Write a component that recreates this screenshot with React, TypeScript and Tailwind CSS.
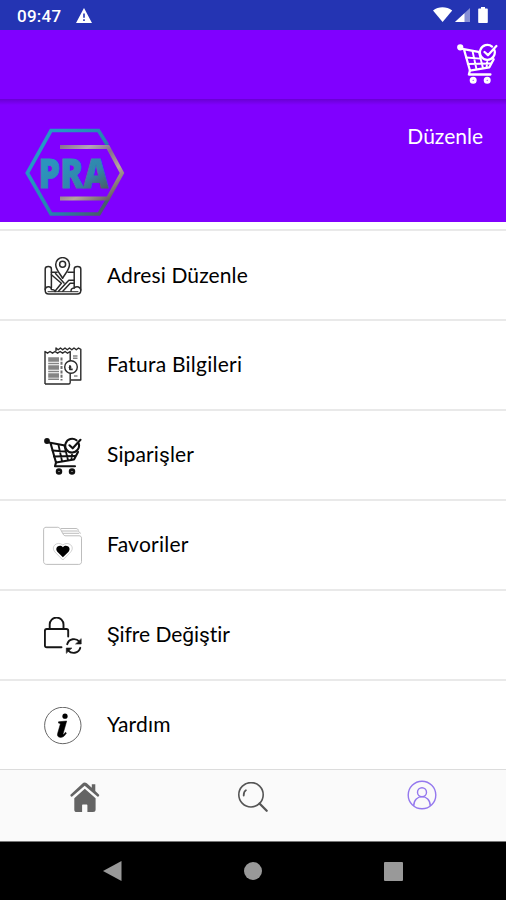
import type { ReactNode } from "react";

function CartIcon({ className }: { className: string }) {
  return (
    <svg viewBox="0 0 38 38" className={className} fill="none" stroke="currentColor" strokeWidth="2.1" strokeLinecap="round" strokeLinejoin="round">
      <circle cx="3" cy="4" r="1.5" strokeWidth="2.8" />
      <path d="M5 5.5 21 8.5M6.5 6 12 25.5 30 22.5 34 15" />
      <path d="M8.5 13.5 21.5 14.5M10 19.5 31 19M14.5 8 18 24M20.5 9 24 23M28 17.5 27.5 22" strokeWidth="1.8" />
      <path d="M12 25.5 11 29.2H31" />
      <path d="M34.7 6.5A6.9 6.9 0 1 1 32.5 3.3M25.5 8.3 28.7 11.3 36.5 2.8" />
      <circle cx="15" cy="34.5" r="1.9" strokeWidth="2.7" />
      <circle cx="28" cy="34.5" r="1.9" strokeWidth="2.7" />
    </svg>
  );
}

function MapIcon() {
  return (
    <svg viewBox="0 0 38 38" className="size-[38px]" fill="none" stroke="#2a2a2a" strokeWidth="1.5" strokeLinejoin="round" strokeLinecap="round">
      <path d="M18.6 21.3C16 16.5 11.7 12.6 11.7 7.5a6.9 6.9 0 0 1 13.8 0c0 5.1-4.3 9-6.9 13.8Z" />
      <circle cx="18.6" cy="7.3" r="3" />
      <path d="M7.4 31V12c0-3.2-6.2-3.2-6.2 0v21.5c0 2 1.4 3.5 3.5 3.5h28.4c2.1 0 3.7-1.5 3.7-3.5V12c0-3.2-6.6-3.2-6.6 0v19" />
      <path d="M1.2 32.3c.6-3.3 6.2-3.3 6.2.2 2.4 0 3.5 1 3.8 2M30.2 31c-3 0-3.3 2-3.1 3.3M30.2 31c2.8-2.4 6.4-.8 6.6 2" />
      <path d="M4 34.7h30" strokeWidth="1" />
      <path d="M7.4 15.2h5.7M24 15.2h6.2M7.4 17.8l10 8.4-6.4 8M11.5 16.5l8.5 9.5M30.2 23.3h-5.4L14.5 34.3M30.2 26.3h-4l-7.4 8" />
    </svg>
  );
}

function InvoiceIcon() {
  return (
    <svg viewBox="0 0 38 38" className="size-[38px]" fill="none" stroke="#2a2a2a" strokeWidth="1.4" strokeLinejoin="round">
      <path d="M12 4V1l2.2 1.8L16.5 1l2.2 1.8L21 1l2.3 1.8L25.5 1l2.3 1.8L30 1l2.3 1.8L34.5 1l2.3 1.3V33H27" />
      <path d="M1 37V4.5l2.5 1.7L6 4.5l2.5 1.7L11 4.5l2.6 1.7 2.5-1.7 2.5 1.7 2.5-1.7 2.4 1.7L26.2 4.5V14M26.2 26V35.5c0 1-.5 1.5-1.5 1.5H1" />
      <circle cx="27" cy="20" r="6.3" />
      <path d="M28.7 22.3h-2.8v-4M24.8 20.7l2.5-1" strokeWidth="1.7" />
      <g stroke="#858585">
        <path d="M4.2 12.5H15M4.2 20.5H15M4.2 28.5H15" strokeWidth="4.5" />
        <path d="M4.2 16.5H15M4.2 24.5H15M4.2 32.3H15" strokeWidth="1.5" />
        <path d="M17.5 10.5v23" stroke="#707070" strokeWidth="2" strokeDasharray="3 1.3" />
        <path d="M29 9h4.5M29 11.2h4.5M30 29h3.5" />
      </g>
    </svg>
  );
}

function FavoritesIcon() {
  return (
    <svg viewBox="0 0 38 38" className="size-[38px] overflow-visible" fill="none" stroke="#b5b5b5" strokeWidth=".9" strokeLinejoin="round">
      <path d="M-.4 34.5V2.7C-.4 1.2.5.3 2.1.3h11.6c1.4 0 2.4 1 3 2.2l2.2 4.3c.7 1.4 1.5 2 3 2H35c1.6 0 2.5.8 2.5 2.4v23.3c0 2-1 2.9-2.8 2.9H2.8c-1.9 0-3.2-1-3.2-2.9Z" />
      <path d="M17 1.5h15c1.4 0 2 .8 2.6 2M18 4h15.3c1.7 0 2.6 1.2 3 2.8M19 6.3h16" />
      <path d="m18.8 33-8-8.1c-4.6-5.4 2.4-11.2 8-7 5.6-4.2 12.6 1.6 8 7Z" strokeWidth=".6" />
      <path fill="#000" stroke="none" d="m18.9 30.3-5.6-5.6c-3.3-4.3 2.6-8 5.6-4.4 3.2-3.6 9 .1 5.7 4.4Z" />
    </svg>
  );
}

function PasswordIcon() {
  return (
    <svg viewBox="0 0 38 38" className="size-[38px]" fill="none" stroke="#161616" strokeWidth="1.9" strokeLinejoin="round" strokeLinecap="round">
      <path d="M17.5 30.2H2.7c-1.1 0-1.8-.7-1.8-1.8V13.8c0-1.1.7-1.8 1.8-1.8h19.7c1.1 0 1.8.7 1.8 1.8v5.7" />
      <path d="M5.7 12V7.5a6.9 6.9 0 0 1 13.8 0V12" />
      <path d="M23.2 27.2c1.7-6 8.8-6.3 12-2.8M36.3 30.8c-1.7 6-8.8 6.3-12 2.8" />
      <path fill="#161616" strokeWidth=".6" d="M37.2 22v5h-5.3ZM22.3 36v-5h5.3Z" />
    </svg>
  );
}

function HelpIcon() {
  return (
    <svg viewBox="0 0 38 38" className="size-[38px]" fill="none">
      <circle cx="18.8" cy="18.5" r="18.2" stroke="#555" strokeWidth=".9" />
      <circle cx="21" cy="9.2" r="2.6" fill="#000" />
      <path fill="#000" stroke="#000" strokeWidth=".5" d="m14.5 14.8 8.2-.8-3.6 12.7c-.2.8.5.8 1 .2l1.3-1.6 1 .7c-1.5 2.8-3.3 4.4-5.7 4.4-2.7 0-3.7-1.6-3.1-3.9l2.6-9c.2-.9-.3-1.3-1.7-1.4Z" />
    </svg>
  );
}

function Logo() {
  return (
    <svg viewBox="0 0 100 90" className="h-[90px] w-[100px]" fill="none" strokeWidth="4">
      <defs>
        <linearGradient id="rim" gradientUnits="userSpaceOnUse" x1="20" y1="20" x2="88" y2="75">
          <stop offset="0" stopColor="#2499c6" />
          <stop offset=".6" stopColor="#267fa8" />
          <stop offset="1" stopColor="#4b5a60" />
        </linearGradient>
        <linearGradient id="bars" gradientUnits="userSpaceOnUse" x1="35" y1="10" x2="82" y2="75">
          <stop offset="0" stopColor="#76607f" />
          <stop offset=".3" stopColor="#b5a2b8" />
          <stop offset=".5" stopColor="#85708a" />
          <stop offset=".72" stopColor="#b5a69c" />
          <stop offset="1" stopColor="#5f5860" />
        </linearGradient>
        <linearGradient id="word" gradientUnits="userSpaceOnUse" x1="40" y1="25" x2="72" y2="70">
          <stop offset="0" stopColor="#2c94bd" />
          <stop offset=".6" stopColor="#3186aa" />
          <stop offset="1" stopColor="#4a5860" />
        </linearGradient>
      </defs>
      <path stroke="url(#rim)" strokeWidth="3.6" d="M82.5 17 73.5 2.5H26L2.3 45 26 86H74L83 71" />
      <path stroke="url(#bars)" d="M35 19H83L97 45 83 70.5H35" />
      <text x="13.5" y="60" textLength="70" lengthAdjust="spacingAndGlyphs" fill="url(#word)" stroke="url(#word)" strokeWidth=".8" className="font-['Open_Sans',sans-serif] text-[41px] font-extrabold">PRA</text>
    </svg>
  );
}

function StatusBar() {
  return (
    <div className="flex h-[30px] items-center bg-[#2434b3] pt-0.5 pr-[15px] pl-[17px] text-white">
      <span className="w-[59px] font-[Roboto,sans-serif] text-[17px] leading-none font-medium tracking-[0.25px]">09:47</span>
      <svg viewBox="0 0 16 15" className="mb-0.5 h-[15px] w-4">
        <path fill="currentColor" d="M8 0 16 15H0Z" />
        <path stroke="#2434b3" strokeWidth="1.6" d="M8 5.5v4.3M8 11.3v1.7" />
      </svg>
      <svg viewBox="0 0 58 18" className="mb-0.5 ml-auto h-[18px] w-[58px]" fill="currentColor">
        <path d="M0 4.5C5.5.3 13.5.3 19.2 4.5L9.6 16Z" />
        <path opacity=".45" d="M37 2v14H22Z" />
        <path d="M31.5 7.2V16H22Z" />
        <path d="M48 1h4v1.6h1.8c.6 0 1 .4 1 1V16c0 .6-.4 1-1 1h-7.6c-.6 0-1-.4-1-1V3.6c0-.6.4-1 1-1H48Z" />
      </svg>
    </div>
  );
}

// Letters with a cedilla or breve are set in the system face.
const fallback = (text: string) =>
  text.split(/([şŞğ])/).map((part, i) =>
    /[şŞğ]/.test(part) ? <span key={i} className="font-[Roboto,sans-serif]">{part}</span> : part,
  );

const items: { label: string; icon: ReactNode; spacing: string }[] = [
  { label: "Adresi Düzenle", icon: <MapIcon />, spacing: "pb-[3px] tracking-[0.12px]" },
  { label: "Fatura Bilgileri", icon: <InvoiceIcon />, spacing: "pb-[5px] tracking-[0.25px]" },
  { label: "Siparişler", icon: <CartIcon className="size-[38px] text-[#111]" />, spacing: "pb-[3px] tracking-[0.12px]" },
  { label: "Favoriler", icon: <FavoritesIcon />, spacing: "pb-[5px] tracking-[0.25px]" },
  { label: "Şifre Değiştir", icon: <PasswordIcon />, spacing: "pb-[3px] tracking-[-0.03px]" },
  { label: "Yardım", icon: <HelpIcon />, spacing: "pb-[5px] tracking-[0.2px]" },
];

export default function App() {
  return (
    <div className="flex h-[900px] w-[506px] flex-col overflow-hidden bg-white font-[Lato,sans-serif] text-black">
      <StatusBar />
      <header className="flex h-[69px] items-start justify-end bg-[#8000ff] pt-[13px] pr-2">
        <CartIcon className="h-[41px] w-[41px] text-white" />
      </header>
      <div className="h-1.5 bg-linear-to-b from-[#6900d2] to-[#8000ff]" />
      <section className="flex h-[117px] items-start justify-between bg-[#8000ff] pr-[23px] pl-[25px]">
        <div className="pt-[23px]"><Logo /></div>
        <span className="pt-[17px] text-[21px] leading-7 text-white">Düzenle</span>
      </section>
      <div className="h-[9px] border-b-2 border-[#e9e9e9]" />
      <ul>
        {items.map(({ label, icon, spacing }) => (
          <li key={label} className="flex h-[90px] items-center border-b-2 border-[#e9e9e9] pt-0.5 pl-11 last:h-[89px] last:border-b last:border-[#dcdcdc]">
            {icon}
            <span className={`ml-[25px] text-[21px] leading-7 [font-variant-ligatures:none] ${spacing}`}>{fallback(label)}</span>
          </li>
        ))}
      </ul>
      <nav className="grid h-[72px] grid-cols-3 justify-items-center border-b border-[#777] bg-[#fafafa] pt-2.5">
        <svg viewBox="0 0 30 32" className="mt-0.5 ml-0.5 h-8 w-[30px]" fill="#646464">
          <path d="M14.5.5c-.8 0-1.4.3-2 .9L.7 12.5c-.9.9.3 2.9 1.5 2.1L14.7 3.7 27.4 14.6c1.2.8 2.4-1.2 1.5-2.1L25.3 9V2.3h-3.5v3.4l-5-4.4C16.2.7 15.4.5 14.5.5Z" />
          <path d="M14.8 6.8 4.3 16.3v11.4c0 1.6.8 2.3 2.3 2.3h5.5v-6.5c0-.7.3-1 1-1h3.3c.7 0 1 .3 1 1V30H23c1.8 0 2.6-.8 2.6-2.5V16.3Z" />
        </svg>
        <svg viewBox="0 0 32 32" className="mt-0.5 h-8 w-8" fill="none" stroke="#555" strokeWidth="1.6" strokeLinecap="round">
          <circle cx="14" cy="12.8" r="12.2" />
          <path d="M6.7 13.5c0-2.7 1-4.6 2.2-5.2" strokeWidth="1.8" />
          <path d="m22.5 21.5 7.2 7.2" strokeWidth="2.3" />
        </svg>
        <svg viewBox="0 0 30 30" className="size-[30px]" fill="none" stroke="#9478ee" strokeWidth="1.4">
          <circle cx="15" cy="15" r="13.8" />
          <circle cx="15" cy="12.2" r="4.5" />
          <path d="M6.7 26c0-12.5 16.6-12.5 16.6 0" />
        </svg>
      </nav>
      <footer className="flex h-[58px] items-center bg-black pl-[103px]">
        <svg viewBox="0 0 19 20" className="h-5 w-[19px]" fill="#999"><path d="M18.5 0v20L0 10Z" /></svg>
        <div className="ml-[122px] size-[18px] rounded-full bg-[#999]" />
        <div className="ml-[122px] size-[19px] rounded-[1px] bg-[#999]" />
      </footer>
    </div>
  );
}
